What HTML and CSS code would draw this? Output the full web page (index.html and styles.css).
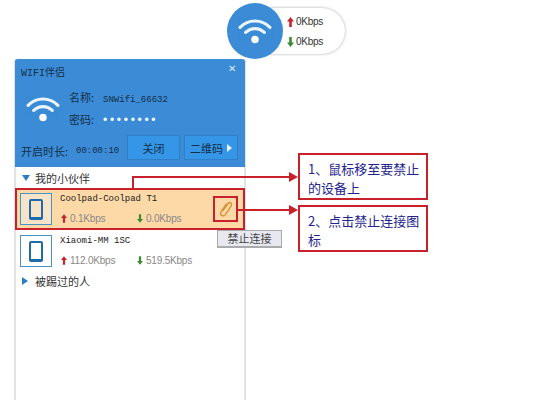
FILE: index.html
```html
<!DOCTYPE html>
<html lang="zh">
<head>
    <meta charset="UTF-8">
    <title>WIFI伴侣</title>
    <link rel="stylesheet" href="styles.css">
</head>
<body>
    <div class="stage">
        <!-- Floating speed widget -->
        <div class="widget">
            <div class="widget-circle">
                <svg width="36" height="28" viewBox="0 0 38 30"><use href="#wifi"/></svg>
            </div>
            <div class="widget-speeds">
                <div class="widget-speed"><svg class="up" width="7" height="10"><use href="#arrow"/></svg>0Kbps</div>
                <div class="widget-speed"><svg class="down" width="7" height="10"><use href="#arrow"/></svg>0Kbps</div>
            </div>
        </div>

        <!-- Main window -->
        <div class="panel">
            <div class="panel-head">
                <div class="title-row">
                    <span class="title">WIFI伴侣</span>
                    <span class="close">✕</span>
                </div>
                <div class="info-row">
                    <svg class="info-wifi" width="38" height="28" viewBox="0 0 38 30"><use href="#wifi"/></svg>
                    <div class="info-text">
                        <div><span class="info-label">名称:</span><span class="mono">SNWifi_66632</span></div>
                        <div><span class="info-label">密码:</span><span class="dots">••••••••</span></div>
                    </div>
                </div>
                <div class="action-row">
                    <span class="duration-label">开启时长:</span>
                    <span class="duration">00:00:10</span>
                    <span class="btn btn-close">关闭</span>
                    <span class="btn btn-qr">二维码<i class="tri-white"></i></span>
                </div>
            </div>

            <div class="group"><i class="tri-down"></i>我的小伙伴</div>

            <div class="device device-active">
                <div class="thumb"><i class="phone"></i></div>
                <div class="device-info">
                    <div class="device-name">Coolpad-Coolpad T1</div>
                    <div class="device-speeds">
                        <span class="rate"><svg class="up" width="6" height="9"><use href="#arrow"/></svg>0.1Kbps</span>
                        <span class="rate"><svg class="down" width="6" height="9"><use href="#arrow"/></svg>0.0Kbps</span>
                    </div>
                </div>
                <div class="block-icon">
                    <svg width="16" height="20" viewBox="0 0 16 20" fill="none" stroke="#d9902f" stroke-width="1.3" stroke-linecap="round">
                        <path d="M5 11.5 L10 4.5 C11.5 2.4 14.6 4.2 13.2 6.8 L7.4 15.6 C5.4 18.4 1.2 16.2 3 12.8 L8.2 5.2"/>
                    </svg>
                </div>
            </div>

            <div class="device">
                <div class="thumb"><i class="phone"></i></div>
                <div class="device-info">
                    <div class="device-name">Xiaomi-MM 1SC</div>
                    <div class="device-speeds">
                        <span class="rate"><svg class="up" width="6" height="9"><use href="#arrow"/></svg>112.0Kbps</span>
                        <span class="rate"><svg class="down" width="6" height="9"><use href="#arrow"/></svg>519.5Kbps</span>
                    </div>
                </div>
            </div>

            <div class="group group-kicked"><i class="tri-right"></i>被踢过的人</div>
        </div>

        <!-- Tooltip and annotations -->
        <div class="tooltip">禁止连接</div>
        <div class="line line-up"></div>
        <div class="line line-one"></div>
        <div class="line line-two"></div>
        <i class="arrow arrow-one"></i>
        <i class="arrow arrow-two"></i>
        <div class="note note-one">1、鼠标移至要禁止的设备上</div>
        <div class="note note-two">2、点击禁止连接图标</div>
    </div>

    <svg width="0" height="0" class="defs">
        <symbol id="wifi" viewBox="0 0 38 30">
            <g fill="none" stroke="#fff" stroke-width="3.4" stroke-linecap="round" opacity="0.9">
                <path d="M3 11 C12 2 26 2 35 11"/>
                <path d="M9 16.5 C15 11 23 11 29 16.5"/>
            </g>
            <circle cx="19" cy="24" r="4" fill="#fff"/>
        </symbol>
        <symbol id="arrow" viewBox="0 0 7 10">
            <path d="M3.5 0 L7 4.5 L4.8 4.5 L4.8 10 L2.2 10 L2.2 4.5 L0 4.5 Z" fill="currentColor"/>
        </symbol>
    </svg>
</body>
</html>
```

FILE: styles.css
```css
body {
    margin: 0;
    background: white;
    font-family: "Noto Sans CJK SC", "Liberation Sans", sans-serif;
    font-size: 11px;
    color: #333;
}

.stage {
    position: relative;
    width: 542px;
    height: 400px;
    overflow: hidden;
}

.defs {
    position: absolute;
}

/* widget */
.widget {
    position: absolute;
    left: 227px;
    top: 3px;
    display: flex;
    align-items: center;
}

.widget-circle {
    width: 56px;
    height: 56px;
    border-radius: 50%;
    background: #3b8bd6;
    display: flex;
    align-items: center;
    justify-content: center;
    position: relative;
    z-index: 1;
}

.widget-speeds {
    width: 82px;
    height: 46px;
    margin-left: -20px;
    padding-left: 24px;
    box-sizing: border-box;
    background: white;
    border-radius: 0 23px 23px 0;
    box-shadow: 0 0 3px rgba(0, 0, 0, 0.35);
    display: flex;
    flex-direction: column;
    justify-content: center;
    gap: 6px;
    padding-top: 1px;
}

.widget-speed {
    font-family: "Liberation Sans", sans-serif;
    font-size: 10px;
    letter-spacing: -0.3px;
    line-height: 14px;
    color: #333;
    display: flex;
    align-items: center;
}

.widget-speed svg {
    margin-right: 2px;
}

.up, .down {
    margin-right: 3px;
}

.up {
    color: #c4242a;
}

.down {
    color: #3d8a34;
    transform: rotate(180deg);
}

/* main window */
.panel {
    position: absolute;
    left: 14px;
    top: 59px;
    width: 228px;
    height: 345px;
    background: white;
    border: solid #e2e2e2;
    border-width: 0 2px;
}

.panel-head {
    height: 108px;
    margin: 0 -1px;
    background: #3b8bd6;
    padding: 0 6px;
    box-sizing: border-box;
    display: flex;
    flex-direction: column;
    border-radius: 3px 3px 0 0;
}

.title-row {
    height: 24px;
    display: flex;
    align-items: center;
    justify-content: space-between;
    color: #14304a;
}

.title {
    font-family: "Liberation Mono", "Noto Sans CJK SC", monospace;
    font-size: 10px;
}

.close {
    color: #dcecfa;
    font-size: 10px;
    margin-right: 3px;
    margin-top: -7px;
}

.info-row {
    display: flex;
    align-items: center;
    gap: 7px;
    height: 51px;
    padding-left: 3px;
    color: #14304a;
}

.info-text {
    display: flex;
    flex-direction: column;
    gap: 3px;
    margin-top: -1px;
    line-height: 16px;
}

.info-label {
    margin-right: 9px;
}

.mono {
    font-family: "Liberation Mono", monospace;
    font-size: 9px;
}

.dots {
    color: #f2f8ff;
    font-family: "Liberation Sans", sans-serif;
    font-size: 12px;
    letter-spacing: 2.7px;
}

.action-row {
    display: flex;
    align-items: center;
    height: 25px;
    margin-top: 1px;
    color: #14304a;
}

.duration-label {
    width: 55px;
    white-space: nowrap;
    padding-top: 6px;
}

.duration {
    width: 51px;
    font-family: "Liberation Mono", monospace;
    font-size: 9px;
    padding-top: 6px;
}

.btn {
    height: 25px;
    box-sizing: border-box;
    background: #3596e8;
    border: 1px solid #2f80c8;
    display: flex;
    align-items: center;
    justify-content: center;
    gap: 4px;
    color: #14304a;
}

.btn-close {
    width: 53px;
    margin-right: 4px;
}

.btn-qr {
    width: 54px;
}

.tri-white {
    border-left: 5px solid #e8f3fc;
    border-top: 4px solid transparent;
    border-bottom: 4px solid transparent;
}

/* device list */
.group {
    height: 21px;
    display: flex;
    align-items: center;
    gap: 5px;
    padding-left: 6px;
    font-size: 11px;
    color: #333;
}

.tri-down {
    border-top: 6px solid #2a7fc4;
    border-left: 4.5px solid transparent;
    border-right: 4.5px solid transparent;
}

.tri-right {
    border-left: 6px solid #2a7fc4;
    border-top: 4.5px solid transparent;
    border-bottom: 4.5px solid transparent;
    margin-right: 2px;
}

.group-kicked {
    margin-top: -2px;
}

.device {
    height: 42px;
    display: flex;
    align-items: center;
    padding-left: 4px;
    box-sizing: border-box;
    position: relative;
}

.device-active {
    background: #fdd9a8;
    border: 2px solid #c8212b;
    margin: 0 -1px;
    padding-left: 3px;
}

.thumb {
    width: 32px;
    height: 32px;
    box-sizing: border-box;
    border: 1px solid #4a94c4;
    background: white;
    display: flex;
    align-items: center;
    justify-content: center;
}

.device-active .thumb {
    background: #f6e3c8;
}

.phone {
    width: 14px;
    height: 21px;
    box-sizing: border-box;
    border: 2px solid #1f6aa8;
    border-bottom-width: 3px;
    border-radius: 2px;
}

.device-info {
    margin-left: 8px;
    display: flex;
    flex-direction: column;
    gap: 7px;
}

.device-name {
    font-family: "Liberation Mono", monospace;
    font-size: 9px;
    line-height: 12px;
    color: #222;
}

.device-speeds {
    display: flex;
    font-family: "Liberation Sans", sans-serif;
    font-size: 10px;
    letter-spacing: -0.2px;
    line-height: 14px;
    color: #888;
}

.rate {
    width: 75px;
    padding-left: 1px;
    display: flex;
    align-items: center;
}

.block-icon {
    position: absolute;
    right: 5px;
    top: 6px;
    width: 25px;
    height: 26px;
    box-sizing: border-box;
    border: 2px solid #c8212b;
    display: flex;
    align-items: center;
    justify-content: center;
}

/* overlays */
.tooltip {
    position: absolute;
    left: 217px;
    top: 230px;
    width: 65px;
    height: 18px;
    box-sizing: border-box;
    background: #e8e8f0;
    border: 1px solid #aaa;
    border-bottom-width: 2px;
    font-size: 11px;
    line-height: 15px;
    text-align: center;
    color: #444;
}

.line {
    position: absolute;
    background: #c8212b;
}

.line-up {
    left: 132px;
    top: 177px;
    width: 2px;
    height: 11px;
}

.line-one {
    left: 132px;
    top: 176px;
    width: 158px;
    height: 2px;
}

.line-two {
    left: 238px;
    top: 209px;
    width: 52px;
    height: 2px;
}

.arrow {
    position: absolute;
    left: 289px;
    border-left: 9px solid #c8212b;
    border-top: 5px solid transparent;
    border-bottom: 5px solid transparent;
}

.arrow-one {
    top: 172px;
}

.arrow-two {
    top: 205px;
}

.note {
    position: absolute;
    left: 298px;
    width: 130px;
    height: 47px;
    box-sizing: border-box;
    border: 2px solid #c8212b;
    padding: 5px 6px 0 8px;
    font-size: 13px;
    line-height: 18.5px;
    color: #23238e;
    background: white;
}

.note-one {
    top: 153px;
}

.note-two {
    top: 205px;
}
```
